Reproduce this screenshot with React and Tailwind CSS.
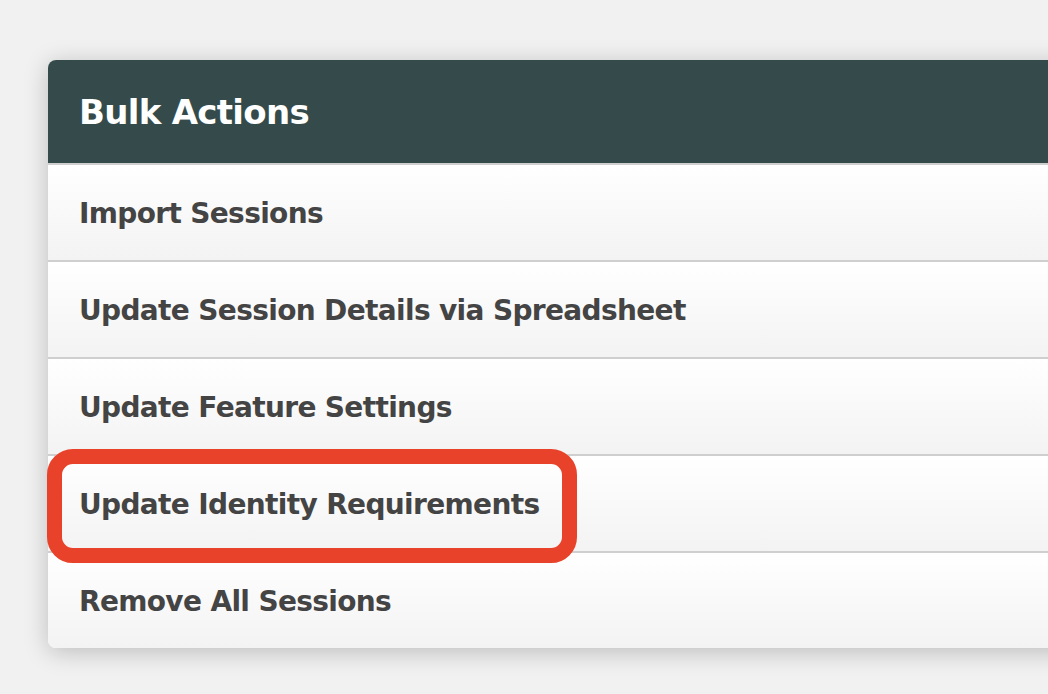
const actions = [
  'Import Sessions',
  'Update Session Details via Spreadsheet',
  'Update Feature Settings',
  'Update Identity Requirements',
  'Remove All Sessions',
];

const App = () => {
  return (
    <div className="relative h-[694px] w-[1048px] overflow-hidden bg-[#f1f1f1] pl-[48px] pt-[60px]" style={{ fontFamily: "'DejaVu Sans', sans-serif" }}>
      <div className="w-[1100px] overflow-hidden rounded-[8px] bg-white shadow-[0_4px_24px_rgba(0,0,0,0.22)]">
        <div className="flex h-[103px] items-center bg-[#354b4b] px-[31px] pt-[2px]">
          <h2 className="text-[34px] font-bold tracking-[-0.7px] text-white">Bulk Actions</h2>
        </div>
        {actions.map((label) => (
          <div
            key={label}
            className="flex h-[97px] items-center border-t-2 border-[#cfcfcf] bg-gradient-to-b from-white to-[#f3f3f3] px-[31px] pt-[2px]"
          >
            <span className="text-[28px] font-bold tracking-[-0.65px] text-[#444444]">{label}</span>
          </div>
        ))}
      </div>

      {/* annotation round the fourth row */}
      <div className="absolute left-[47px] top-[449px] h-[114px] w-[530px] rounded-[26px] border-[15px] border-[#e8422a]" />
    </div>
  );
};

export default App;
